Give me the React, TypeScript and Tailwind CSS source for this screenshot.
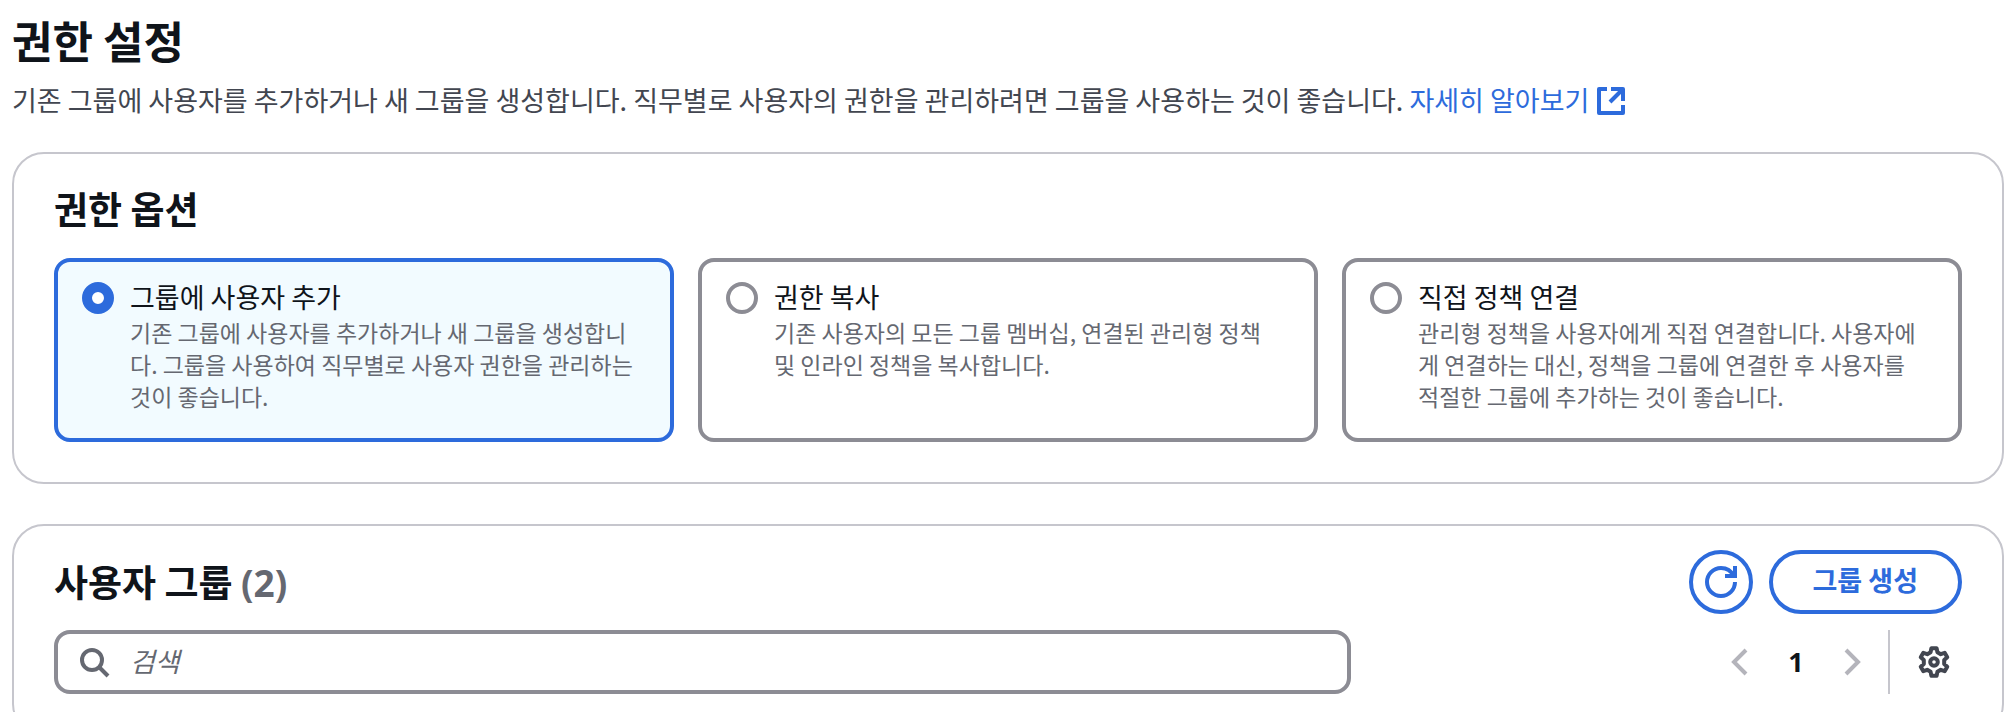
import { useState } from "react";
import type { ReactNode } from "react";

type PermissionOption = {
    id: string;
    title: string;
    description: string;
};

const OPTIONS: PermissionOption[] = [
    {
        id: "group",
        title: "그룹에 사용자 추가",
        description:
            "기존 그룹에 사용자를 추가하거나 새 그룹을 생성합니다. 그룹을 사용하여 직무별로 사용자 권한을 관리하는 것이 좋습니다.",
    },
    {
        id: "copy",
        title: "권한 복사",
        description:
            "기존 사용자의 모든 그룹 멤버십, 연결된 관리형 정책 및 인라인 정책을 복사합니다.",
    },
    {
        id: "attach",
        title: "직접 정책 연결",
        description:
            "관리형 정책을 사용자에게 직접 연결합니다. 사용자에게 연결하는 대신, 정책을 그룹에 연결한 후 사용자를 적절한 그룹에 추가하는 것이 좋습니다.",
    },
];

// All icons share a 16 unit grid and 2 unit strokes
const Icon = ({ children, className = "" }: { children: ReactNode; className?: string }) => (
    <svg
        viewBox="0 0 16 16"
        fill="none"
        stroke="currentColor"
        strokeWidth={2}
        aria-hidden="true"
        className={`size-8 shrink-0 ${className}`}
    >
        {children}
    </svg>
);

const ExternalIcon = () => (
    <Icon className="inline-block align-[-6px]">
        <path d="M8 2h6v6" strokeLinejoin="round" />
        <path d="M7.5 8.5 14 2" />
        <path d="M14 10v4H2V2h4" strokeLinejoin="round" />
    </Icon>
);

const RefreshIcon = () => (
    <Icon>
        <path d="M15 8c0 3.87-3.13 7-7 7s-7-3.13-7-7 3.13-7 7-7c2.79 0 5.2 1.63 6.33 4" />
        <path d="M10 5h5V0" />
    </Icon>
);

const SearchIcon = () => (
    <Icon>
        <circle cx="7" cy="7" r="5" />
        <path d="m15 15-4.5-4.5" />
    </Icon>
);

const GearIcon = () => (
    <Icon>
        <path
            strokeLinejoin="round"
            d="M6.3 3.1 6.7 1.1H9.3L9.7 3.1 11.39 4.08 13.33 3.42 14.63 5.68 13.09 7.02V8.98L14.63 10.32 13.33 12.58 11.39 11.92 9.7 12.9 9.3 14.9H6.7L6.3 12.9 4.61 11.92 2.67 12.58 1.37 10.32 2.91 8.98V7.02L1.37 5.68 2.67 3.42 4.61 4.08Z"
        />
        <circle cx="8" cy="8" r="1.9" />
    </Icon>
);

const Card = ({ children }: { children: ReactNode }) => (
    <section className="rounded-[32px] border-2 border-[#c6c6cd] bg-white px-10">
        {children}
    </section>
);

const OptionTile = ({
    option,
    checked,
    onSelect,
}: {
    option: PermissionOption;
    checked: boolean;
    onSelect: () => void;
}) => (
    <label
        className={`flex gap-4 rounded-2xl border-4 pt-5 pr-8 pb-[26px] pl-6 ${
            checked ? "border-[#2d6bdc] bg-[#f2fbff]" : "border-[#8c8c94] bg-white"
        }`}
    >
        <input
            type="radio"
            name="permission"
            value={option.id}
            checked={checked}
            onChange={onSelect}
            className="size-8 shrink-0 appearance-none rounded-full border-4 border-[#8c8c94] bg-white checked:border-10 checked:border-[#2d6bdc]"
        />
        <span className="flex flex-col gap-1">
            <span className="text-[27px] leading-[30px] text-[#0f141a]">{option.title}</span>
            <span className="text-[23px] leading-8 text-[#656871]">
                {option.description}
            </span>
        </span>
    </label>
);

const App = () => {
    const [selected, setSelected] = useState("group");
    const [query, setQuery] = useState("");

    return (
        <main className="pt-3 pr-2 pl-3 font-['Noto_Sans_CJK_KR',sans-serif] text-[#0f141a]">
            <h1 className="text-[44px] leading-14 font-bold">권한 설정</h1>
            <p className="mt-3 text-[27px] leading-10 text-[#424650]">
                기존 그룹에 사용자를 추가하거나 새 그룹을 생성합니다. 직무별로 사용자의 권한을
                관리하려면 그룹을 사용하는 것이 좋습니다.{" "}
                <a href="#learn-more" className="text-[#2d6bdc]">
                    자세히 알아보기 <ExternalIcon />
                </a>
            </p>

            <div className="mt-8 flex flex-col gap-10">
                <Card>
                    <h2 className="pt-8 text-[37px] leading-11 font-bold">권한 옵션</h2>
                    <div className="mt-7 mb-10 grid grid-cols-3 gap-6">
                        {OPTIONS.map((option) => (
                            <OptionTile
                                key={option.id}
                                option={option}
                                checked={selected === option.id}
                                onSelect={() => setSelected(option.id)}
                            />
                        ))}
                    </div>
                </Card>

                <Card>
                    <div className="flex items-center justify-between pt-6">
                        <h2 className="text-[37px] leading-11 font-bold">
                            사용자 그룹{" "}
                            <span className="font-[Noto_Sans] font-bold text-[#656871]">(2)</span>
                        </h2>
                        <div className="flex gap-4 text-[#2d6bdc]">
                            <button
                                type="button"
                                aria-label="새로 고침"
                                className="flex size-16 items-center justify-center rounded-full border-4 border-current"
                            >
                                <RefreshIcon />
                            </button>
                            <button
                                type="button"
                                className="h-16 rounded-full border-4 border-current px-10 pb-1 text-[27px] font-bold"
                            >
                                그룹 생성
                            </button>
                        </div>
                    </div>

                    <div className="mt-4 flex items-center justify-between pb-10">
                        <label className="flex h-16 w-[68%] items-center gap-5 rounded-2xl border-4 border-[#8c8c94] px-5 text-[#656871]">
                            <SearchIcon />
                            <input
                                type="text"
                                aria-label="검색"
                                placeholder="검색"
                                value={query}
                                onChange={(e) => setQuery(e.target.value)}
                                className="min-w-0 flex-1 pb-0.5 text-[27px] text-[#0f141a] outline-none placeholder:text-[#656871] placeholder:italic"
                            />
                        </label>
                        <div className="flex items-center">
                            <button type="button" aria-label="이전 페이지" className="text-[#b4b4bb]">
                                <Icon>
                                    <path d="M11 2 5 8l6 6" />
                                </Icon>
                            </button>
                            <button
                                type="button"
                                className="w-20 font-[Noto_Sans] text-[27px] font-bold"
                            >
                                1
                            </button>
                            <button type="button" aria-label="다음 페이지" className="text-[#b4b4bb]">
                                <Icon>
                                    <path d="m5 2 6 6-6 6" />
                                </Icon>
                            </button>
                            <div className="ml-5 h-16 w-0.5 bg-[#c6c6cd]" />
                            <button
                                type="button"
                                aria-label="기본 설정"
                                className="mr-3 ml-7 text-[#424650]"
                            >
                                <GearIcon />
                            </button>
                        </div>
                    </div>
                </Card>
            </div>
        </main>
    );
};

export default App;
